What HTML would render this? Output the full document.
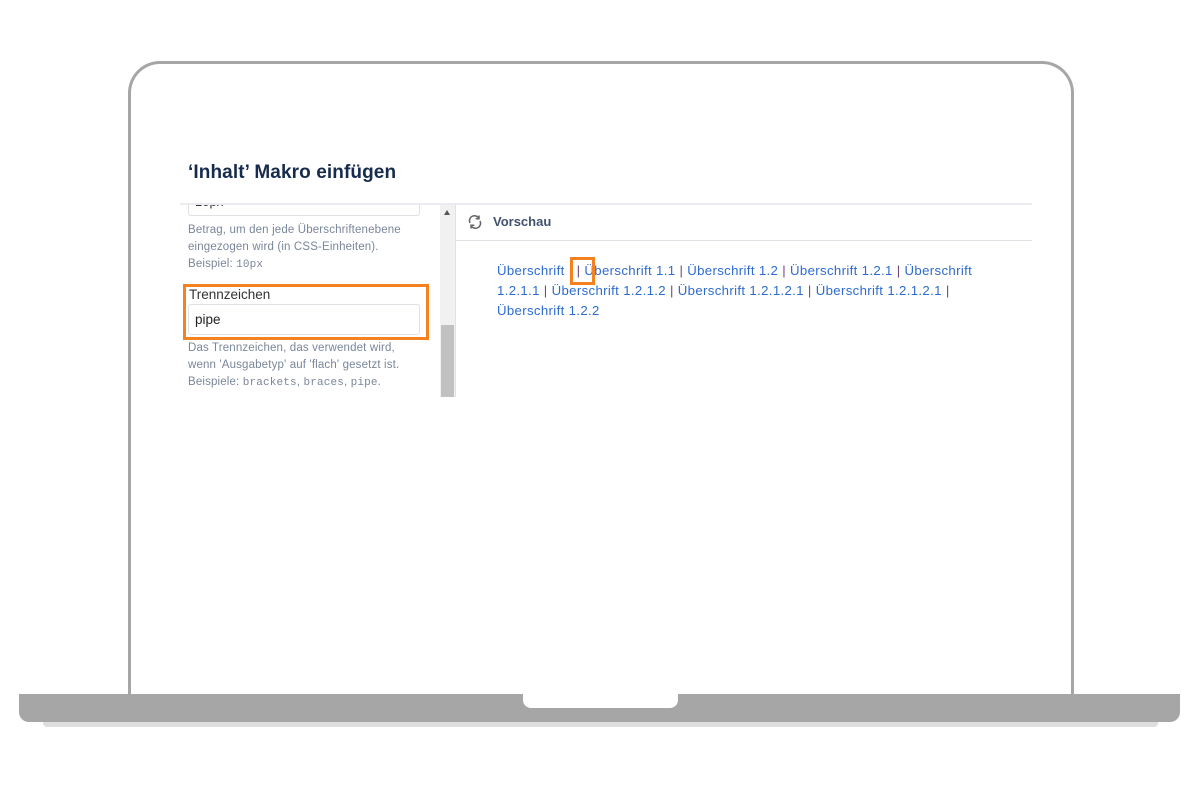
<!DOCTYPE html>
<html><head><meta charset="utf-8"><style>
body{margin:0;width:1200px;height:790px;background:#fff;position:relative;overflow:hidden;font-family:"Liberation Sans",sans-serif}
.a{position:absolute}
.frame{left:128px;top:61px;width:940px;height:650px;border:3px solid #a6a6a6;border-bottom:none;border-radius:32px 32px 0 0}
.base{left:19px;top:694px;width:1161px;height:28px;background:#a6a6a6;border-radius:0 0 10px 10px}
.notch{left:523px;top:694px;width:155px;height:14px;background:#fff;border-radius:0 0 8px 8px}
.shadow{left:43px;top:722px;width:1115px;height:5px;background:#dedede;border-radius:0 0 4px 4px}
.title{left:188px;top:162px;font-size:19px;color:#172b4d;font-weight:bold;letter-spacing:0.1px}
.hr{left:180px;top:203px;width:852px;height:2px;background:#ebecf0}
.small{font-size:11.5px;color:#7a869a;line-height:17px;white-space:nowrap;letter-spacing:0.15px}
.mono{font-family:"Liberation Mono",monospace;font-size:11px}
.inp{border:1px solid #dfe1e6;border-radius:3px;background:#fff}
.link{color:#2d6bd0;font-size:13.2px;line-height:20px;white-space:nowrap;letter-spacing:0.35px}
.sep{color:#6b4a7a}
</style></head><body>
<div class="a frame"></div>
<div class="a base"></div>
<div class="a notch"></div>
<div class="a shadow"></div>
<div class="a title">‘Inhalt’ Makro einfügen</div>
<div class="a hr"></div>
<div class="a" style="left:180px;top:205px;width:260px;height:192px;overflow:hidden">
 <div class="a inp" style="left:8px;top:-14px;width:230px;height:23px"><span class="a" style="left:6px;top:2px;font-size:13px;color:#333">10px</span></div>
 <div class="a small" style="left:8px;top:17px">Betrag, um den jede Überschriftenebene<br>eingezogen wird (in CSS-Einheiten).<br>Beispiel: <span class="mono">10px</span></div>
 <div class="a" style="left:9px;top:82px;font-size:13.5px;color:#333">Trennzeichen</div>
 <div class="a inp" style="left:8px;top:99px;width:230px;height:29px"><span class="a" style="left:6px;top:7px;font-size:13.5px;color:#222">pipe</span></div>
 <div class="a small" style="left:8px;top:135px">Das Trennzeichen, das verwendet wird,<br>wenn 'Ausgabetyp' auf 'flach' gesetzt ist.<br>Beispiele: <span class="mono">brackets</span>, <span class="mono">braces</span>, <span class="mono">pipe</span>.</div>
</div>
<div class="a" style="left:440px;top:205px;width:15px;height:192px;background:#f1f1f1"></div>
<div class="a" style="left:444px;top:210px;width:0;height:0;border-left:3.5px solid transparent;border-right:3.5px solid transparent;border-bottom:5px solid #555"></div>
<div class="a" style="left:441px;top:325px;width:13px;height:72px;background:#c1c1c1"></div>
<div class="a" style="left:455px;top:205px;width:1px;height:192px;background:#dfe1e6"></div>
<div class="a" style="left:456px;top:240px;width:576px;height:1px;background:#dfe1e6"></div>
<svg class="a" style="left:467px;top:214px" width="16" height="16" viewBox="0 0 16 16" fill="none" stroke="#666" stroke-width="1.5"><path d="M3 9A5 5 0 0 1 12 4.5M12 1.5v3.3H8.7M13 7A5 5 0 0 1 4 11.5M4 14.5v-3.3h3.3"/></svg>
<div class="a" style="left:493px;top:214px;font-size:13px;font-weight:bold;color:#42526e">Vorschau</div>
<div class="a link" style="left:497px;top:261px">Überschrift <span style="display:inline-block;width:8px"></span><span class="sep">|</span> Überschrift 1.1 <span class="sep">|</span> Überschrift 1.2 <span class="sep">|</span> Überschrift 1.2.1 <span class="sep">|</span> Überschrift<br>1.2.1.1 <span class="sep">|</span> Überschrift 1.2.1.2 <span class="sep">|</span> Überschrift 1.2.1.2.1 <span class="sep">|</span> Überschrift 1.2.1.2.1 <span class="sep">|</span><br>Überschrift 1.2.2</div>
<div class="a" style="left:570px;top:257px;width:19px;height:22px;border:3px solid #f58220"></div>
<div class="a" style="left:183px;top:284px;width:240px;height:50px;border:3px solid #f58220"></div>
</body></html>
